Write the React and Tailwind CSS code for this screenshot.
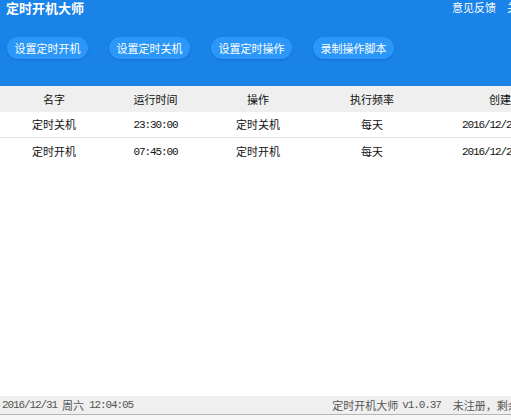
import React from 'react';

const cn = '"Noto Sans CJK SC", sans-serif';

const actions = ['设置定时开机', '设置定时关机', '设置定时操作', '录制操作脚本'];

const tasks = [
  { name: '定时关机', time: '23:30:00', op: '定时关机', freq: '每天', created: '2016/12/28 21:10:33' },
  { name: '定时开机', time: '07:45:00', op: '定时开机', freq: '每天', created: '2016/12/28 21:11:02' },
];

// column widths, last one runs off the window like the screenshot
const cols = ['w-[108px]', 'w-[95px]', 'w-[110px]', 'w-[118px]', 'w-[160px]'];

function Num({ children }) {
  return (
    <span className="text-[11px] tracking-[-1.1px]" style={{ fontFamily: '"Liberation Mono", monospace' }}>
      {children}
    </span>
  );
}

export default function App() {
  return (
    <div className="w-[511px] h-[420px] overflow-hidden bg-white flex flex-col" style={{ fontFamily: cn }}>
      {/* blue top area */}
      <div className="h-[86px] bg-[#1a83e8] shrink-0 flex flex-col">
        <div className="flex items-start h-[37px]">
          <div className="pl-[6px] text-[13px] leading-[16px] font-bold text-white">定时开机大师</div>
          <div className="ml-auto flex gap-[11px] text-[11px] leading-[14px] text-white whitespace-nowrap mr-[-18px]">
            <span>意见反馈</span>
            <span>关于</span>
          </div>
        </div>
        <div className="flex gap-[21px] pl-[7px]">
          {actions.map((a) => (
            <button
              key={a}
              className="w-[81px] h-[22px] rounded-full bg-[#2a97f9] text-white text-[11px] leading-[22px] shadow-[0_1px_2px_rgba(0,60,140,0.25)]"
            >
              {a}
            </button>
          ))}
        </div>
      </div>

      {/* table */}
      <div className="flex-1 overflow-hidden">
        <div className="flex h-[26px] bg-[#efefef] text-[11px] text-[#111] items-center whitespace-nowrap">
          {['名字', '运行时间', '操作', '执行频率', '创建时间'].map((h, i) => (
            <div key={h} className={`${cols[i]} shrink-0 text-center`}>{h}</div>
          ))}
        </div>
        {tasks.map((t, idx) => (
          <div
            key={idx}
            className={`flex h-[26px] items-center text-[11px] text-[#111] whitespace-nowrap ${idx === 0 ? 'border-b border-[#e4e4e4]' : ''}`}
          >
            <div className={`${cols[0]} shrink-0 text-center`}>{t.name}</div>
            <div className={`${cols[1]} shrink-0 text-center`}><Num>{t.time}</Num></div>
            <div className={`${cols[2]} shrink-0 text-center`}>{t.op}</div>
            <div className={`${cols[3]} shrink-0 text-center`}>{t.freq}</div>
            <div className={`${cols[4]} shrink-0 pl-[31px]`}><Num>{t.created}</Num></div>
          </div>
        ))}
      </div>

      {/* status bar */}
      <div className="h-[19px] bg-[#efefef] border-b border-[#b5b5b5] flex items-center text-[11px] text-[#555] whitespace-nowrap shrink-0">
        <div className="pl-[2px] flex items-center gap-[5px]">
          <Num>2016/12/31</Num>
          <span>周六</span>
          <Num>12:04:05</Num>
        </div>
        <div className="ml-auto flex items-center gap-[12px] mr-[-31px]">
          <span className="flex items-center gap-[4px]">
            <span>定时开机大师</span>
            <Num>v1.0.37</Num>
          </span>
          <span>未注册，剩余30天</span>
        </div>
      </div>
      <div className="h-[5px] bg-[#f7f7f7] shrink-0" />
    </div>
  );
}
